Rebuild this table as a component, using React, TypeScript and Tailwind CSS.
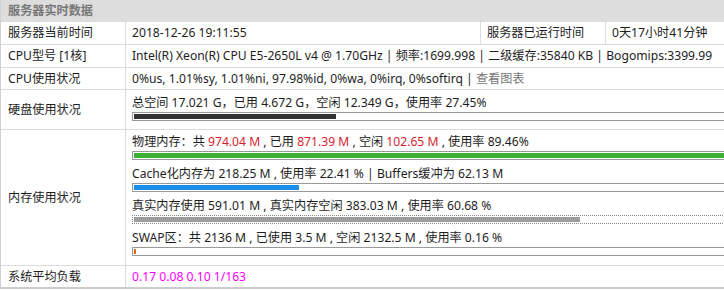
import React from "react";

const FONT = { fontFamily: '"Noto Sans", "Noto Sans CJK SC", sans-serif' };

function Bar({ pct, color, dotted }: { pct: number; color: string; dotted?: boolean }) {
  return (
    <div
      className={
        "h-[9px] w-[739px] p-[1px] " +
        (dotted ? "border border-dotted border-[#888]" : "border border-[#999]")
      }
    >
      <div className="h-full" style={{ width: `max(${pct}%, 2px)`, backgroundColor: color }} />
    </div>
  );
}

const R = ({ children }: { children: React.ReactNode }) => (
  <span className="text-[#d81e2c]">{children}</span>
);

function Row({ label, h, children }: { label: string; h: string; children: React.ReactNode }) {
  return (
    <div className={"flex border-t border-[#dcdcdc] " + h}>
      <div className="w-[125px] shrink-0 border-r border-[#dcdcdc] pl-[7px] flex items-center">{label}</div>
      <div className="flex-1 pl-[6px]">{children}</div>
    </div>
  );
}

export default function App() {
  return (
    <div className="w-[724px] h-[290px] overflow-hidden bg-white" style={FONT}>
      <div className="w-[875px] border-l border-[#d0d0d0] border-b-2 border-b-[#cccccc] text-[12.15px] text-[#1e1e1e] leading-[18px]">
        <div className="h-[21px] bg-[#dddddd] pl-[7px] flex items-center font-bold text-[#777]">服务器实时数据</div>
        <div className="flex border-t border-[#dcdcdc] h-[23px]">
          <div className="w-[125px] shrink-0 border-r border-[#dcdcdc] pl-[7px] flex items-center">服务器当前时间</div>
          <div className="w-[355px] shrink-0 border-r border-[#dcdcdc] pl-[6px] flex items-center">2018-12-26 19:11:55</div>
          <div className="w-[125px] shrink-0 border-r border-[#dcdcdc] pl-[6px] flex items-center">服务器已运行时间</div>
          <div className="flex-1 pl-[6px] flex items-center">0天17小时41分钟</div>
        </div>
        <Row label="CPU型号 [1核]" h="h-[23px]">
          <div className="h-full flex items-center whitespace-nowrap">
            Intel(R) Xeon(R) CPU E5-2650L v4 @ 1.70GHz | 频率:1699.998 | 二级缓存:35840 KB | Bogomips:3399.99
          </div>
        </Row>
        <Row label="CPU使用状况" h="h-[22px]">
          <div className="h-full flex items-center whitespace-nowrap">
            0%us, 1.01%sy, 1.01%ni, 97.98%id, 0%wa, 0%irq, 0%softirq |&nbsp;<span className="text-[#777]">查看图表</span>
          </div>
        </Row>
        <Row label="硬盘使用状况" h="h-[40px]">
          <div className="pt-[4px]">
            <div className="whitespace-nowrap">总空间 17.021 G，已用 4.672 G，空闲 12.349 G，使用率 27.45%</div>
            <Bar pct={27.45} color="#333333" />
          </div>
        </Row>
        <Row label="内存使用状况" h="h-[136px]">
          <div className="pt-[3px] flex flex-col gap-[5px]">
            <div>
              <div className="whitespace-nowrap">
                物理内存：共 <R>974.04 M</R> , 已用 <R>871.39 M</R> , 空闲 <R>102.65 M</R> , 使用率 89.46%
              </div>
              <Bar pct={89.46} color="#3bb033" />
            </div>
            <div>
              <div className="whitespace-nowrap">Cache化内存为 218.25 M , 使用率 22.41 % | Buffers缓冲为 62.13 M</div>
              <Bar pct={22.41} color="#1a8fe8" />
            </div>
            <div>
              <div className="whitespace-nowrap">真实内存使用 591.01 M , 真实内存空闲 383.03 M , 使用率 60.68 %</div>
              <Bar pct={60.68} color="#9d9d9d" dotted />
            </div>
            <div>
              <div className="whitespace-nowrap">SWAP区：共 2136 M , 已使用 3.5 M , 空闲 2132.5 M , 使用率 0.16 %</div>
              <Bar pct={0.16} color="#f0660f" />
            </div>
          </div>
        </Row>
        <Row label="系统平均负载" h="h-[22px]">
          <div className="h-full flex items-center text-[#ff00ff]">0.17 0.08 0.10 1/163</div>
        </Row>
      </div>
    </div>
  );
}
